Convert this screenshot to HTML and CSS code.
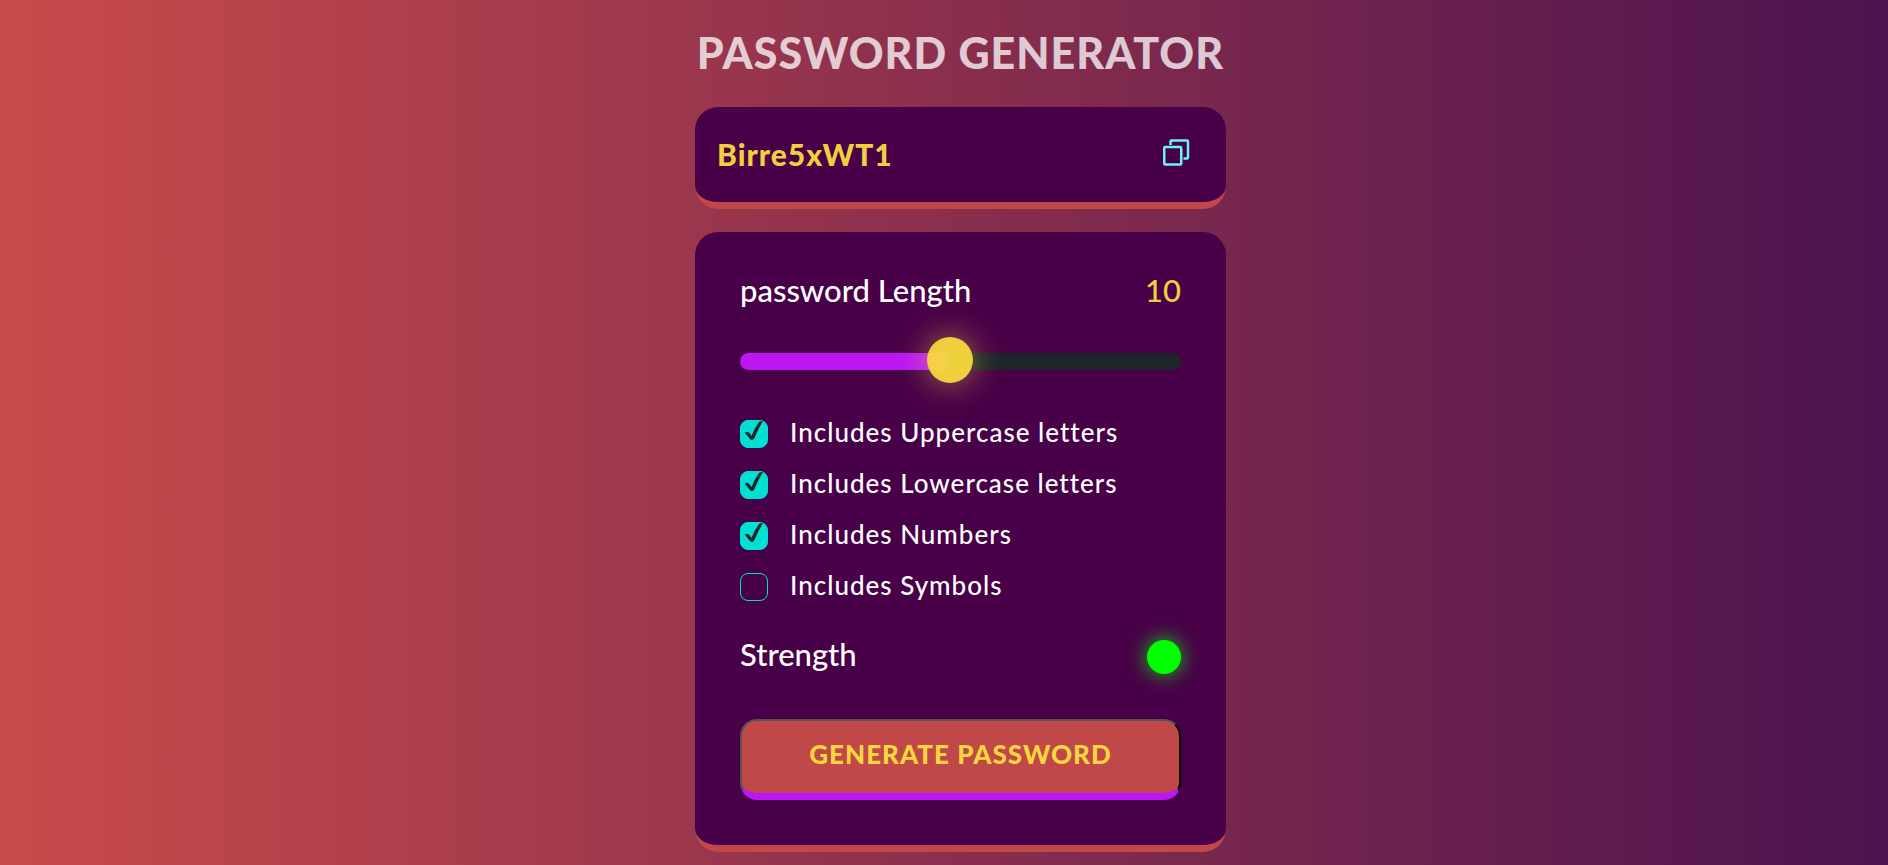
FILE: index.html
```html
<!DOCTYPE html>
<html lang="en">
<head>
<meta charset="utf-8">
<meta name="viewport" content="width=device-width, initial-scale=1">
<title>Password Generator</title>
<link rel="stylesheet" href="styles.css">
</head>
<body>
<main class="generator">
  <h1 class="title">PASSWORD GENERATOR</h1>
  <div class="display">
    <input class="password" type="text" value="Birre5xWT1" aria-label="Password" readonly>
    <button class="copy" type="button" aria-label="Copy password">
      <svg class="copy-icon" viewBox="0 0 54 54" fill="none" stroke="currentColor" stroke-width="5">
        <rect x="2.500" y="16" width="34" height="35" rx="2"/>
        <path d="M15 12V5a2 2 0 0 1 2-2h31a2 2 0 0 1 2 2v32a2 2 0 0 1-2 2h-7"/>
      </svg>
    </button>
  </div>
  <form class="panel">
    <div class="row">
      <label class="label" for="length">password Length</label>
      <output class="count" for="length">10</output>
    </div>
    <input class="slider" id="length" type="range" min="1" max="20" value="10">
    <div class="options">
      <label class="option"><input class="check" type="checkbox" checked><span>Includes Uppercase letters</span></label>
      <label class="option"><input class="check" type="checkbox" checked><span>Includes Lowercase letters</span></label>
      <label class="option"><input class="check" type="checkbox" checked><span>Includes Numbers</span></label>
      <label class="option"><input class="check" type="checkbox"><span>Includes Symbols</span></label>
    </div>
    <div class="row strength">
      <span class="label">Strength</span>
      <span class="indicator"></span>
    </div>
    <button class="generate" type="button">GENERATE PASSWORD</button>
  </form>
</main>
</body>
</html>
```
FILE: styles.css
```css
* { box-sizing: border-box; margin: 0; padding: 0; }

body {
  min-height: 100vh;
  background: linear-gradient(to right, #c94b4b, #4b134f);
  font-family: Lato, "Open Sans", sans-serif;
  font-weight: 500;
  color: #fff;
}

.generator {
  display: flex;
  flex-direction: column;
  align-items: center;
  padding: 23px 0 12px 33px;
}

.title {
  margin-bottom: 24px;
  font-size: 43px;
  line-height: 60px;
  font-weight: 900;
  letter-spacing: 1px;
  white-space: nowrap;
  color: rgba(255, 255, 255, 0.75);
}

.display,
.panel {
  width: 100%;
  max-width: 531px;
  background: #480048;
  border-bottom: 7px solid #c04848;
  border-radius: 23px;
}

.display {
  display: flex;
  align-items: center;
  justify-content: space-between;
  margin-bottom: 23px;
  padding: 27px 36px 28px 22px;
}

.password {
  flex: 1;
  min-width: 0;
  height: 40px;
  border: 0;
  outline: 0;
  background: transparent;
  font-family: inherit;
  font-size: 30px;
  font-weight: 900;
  letter-spacing: 1px;
  color: #f0d03f;
}

.copy {
  display: flex;
  padding-bottom: 4px;
  border: 0;
  background: none;
  color: #69f5f0;
  cursor: pointer;
}

.copy-icon { width: 27px; height: 27px; }

.panel { padding: 41px 45px 45px; }

.row {
  display: flex;
  align-items: center;
  justify-content: space-between;
  height: 34px;
}

.label,
.count {
  font-size: 31px;
  line-height: 34px;
}

.count { color: #f0d03f; }

.slider {
  display: block;
  width: 100%;
  height: 17px;
  margin: 46px 0 50px;
  appearance: none;
  border-radius: 9px;
  background: linear-gradient(to right, #bb16f3 47%, #1c252a 47%);
}

.slider::-webkit-slider-thumb {
  appearance: none;
  width: 46px;
  height: 46px;
  margin-top: -3px;
  border-radius: 50%;
  background: rgba(252, 223, 60, 0.93);
  box-shadow: 0 0 32px rgba(249, 219, 61, 0.55);
}

.options {
  display: grid;
  gap: 23px;
}

.option {
  display: flex;
  align-items: center;
  gap: 22px;
  height: 28px;
  font-size: 26px;
  line-height: 26px;
  letter-spacing: 1px;
}

.option span { padding-bottom: 4px; }

.check {
  display: grid;
  flex: none;
  width: 28px;
  height: 28px;
  appearance: none;
  border: 1px solid #00e0d3;
  border-radius: 8px;
}

.check:checked { background: #00e0d3; }

.check:checked::before {
  content: "";
  width: 26px;
  height: 26px;
  background: #1c252a;
  clip-path: path("M4 12 Q5 10 7 11 Q9 12 10.500 15 Q13 8 18 1 Q19 0 22 0 Q17 8 13.500 17 Q12.500 19 11 19 Q9.500 19 9 18 Z");
}

.strength { margin: 39px 0 45px; }

.strength .label { padding-bottom: 6px; }

.indicator {
  width: 34px;
  height: 34px;
  border-radius: 50%;
  background: #0f0;
  box-shadow: 0 0 20px rgba(0, 255, 0, 0.85);
}

.generate {
  display: block;
  width: 100%;
  padding: 16px 24px 22px;
  border: 2px solid;
  border-color: #555 #000 #bb16f3 #555;
  border-bottom-width: 7px;
  border-radius: 17px;
  background: #c04848;
  font-family: inherit;
  font-size: 26px;
  line-height: 34px;
  font-weight: 900;
  letter-spacing: 1px;
  color: #f9d63f;
  cursor: pointer;
}
```
